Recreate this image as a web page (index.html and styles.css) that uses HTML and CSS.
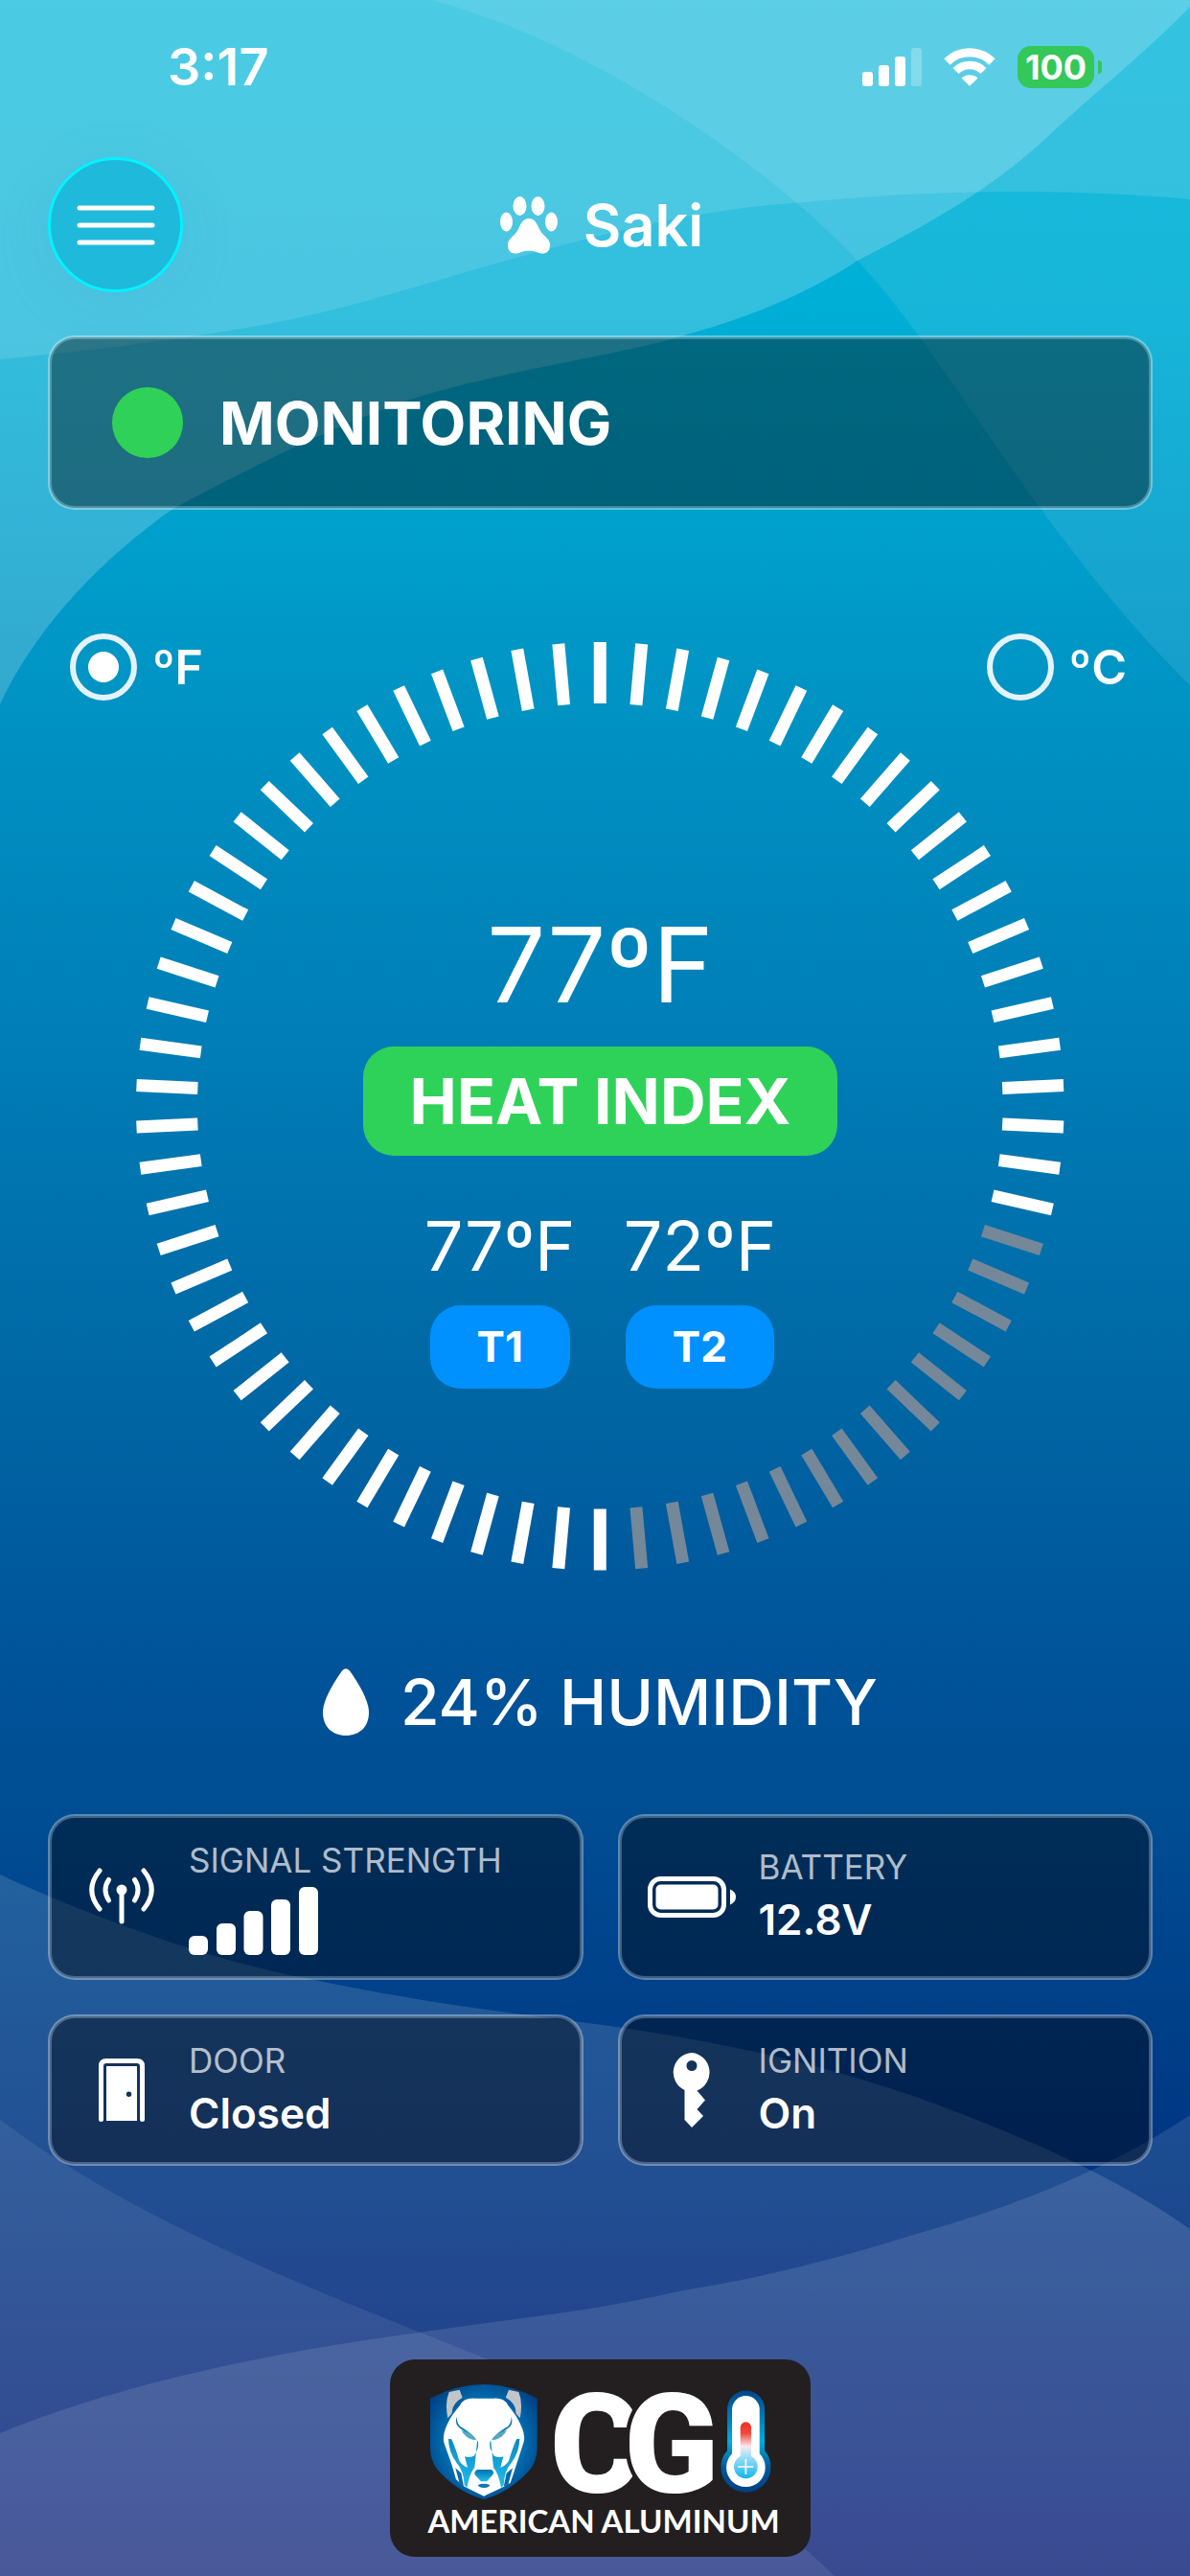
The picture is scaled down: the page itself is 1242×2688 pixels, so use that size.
FILE: index.html
```html
<!DOCTYPE html>
<html lang="en">
<head>
<meta charset="utf-8">
<meta name="viewport" content="width=device-width, initial-scale=1">
<title>Saki</title>
<link rel="stylesheet" href="styles.css">
</head>
<body>
<div class="screen">
  <svg class="backdrop" viewBox="0 0 1242 2688" preserveAspectRatio="none" aria-hidden="true">
    <g fill="#fff">
      <path fill-opacity=".2" d="M0 0H1242V7C1190 60 1150 90 1093 143C1030 202 960 238 895 272C830 315 760 338 689 357C600 378 510 391 428 417C330 451 240 500 182 530C110 580 40 650 0 735Z"/>
      <path fill-opacity=".09" d="M451 0C560 30 660 85 752 150C810 192 850 225 895 272C940 320 980 380 1022 440C1090 540 1165 640 1242 715V0Z"/>
      <path fill-opacity=".12" d="M0 375C90 366 180 356 269 340C370 322 460 290 546 267C640 240 740 217 840 211C970 198 1110 196 1242 208V0H0Z"/>
      <path fill-opacity=".133" d="M0 1956C130 2016 250 2052 323 2065C450 2092 550 2102 650 2116C760 2132 860 2155 956 2188C1060 2226 1160 2268 1242 2326V2688H0Z"/>
      <path fill-opacity=".11" d="M1242 2207C1150 2268 1050 2305 950 2333C870 2358 790 2378 713 2390C620 2412 530 2420 444 2433C270 2456 120 2490 0 2539V2688H1242Z"/>
      <path fill-opacity=".08" d="M0 2212C60 2256 120 2292 198 2330C300 2380 400 2418 507 2461C650 2520 770 2590 871 2688H0Z"/>
    </g>
  </svg>

  <div class="status">
    <span class="clock">3:17</span>
    <div class="status-icons">
      <svg width="62" height="40" viewBox="0 0 62 40" fill="#fff" aria-hidden="true">
        <rect x="0" y="25" width="11" height="15" rx="3"/><rect x="17" y="18" width="11" height="22" rx="3"/><rect x="34" y="9" width="11" height="31" rx="3"/><rect x="51" y="0" width="11" height="40" rx="3" opacity=".25"/>
      </svg>
      <svg width="54" height="40" viewBox="0 0 54 40" fill="none" stroke="#fff" aria-hidden="true">
        <path d="M3.500 14.500A33.500 33.500 0 0 1 50.500 14.500" stroke-width="9"/>
        <path d="M12.500 24A20.500 20.500 0 0 1 41.500 24" stroke-width="8.500"/>
        <path d="M18.500 31.500A12.500 12.500 0 0 1 35.500 31.500L27 39.800Z" fill="#fff" stroke="none"/>
      </svg>
      <div class="phone-battery"><span class="phone-level">100</span><i class="phone-nub"></i></div>
    </div>
  </div>

  <header class="topbar">
    <button class="menu" type="button" aria-label="Menu">
      <svg width="82" height="42" viewBox="0 0 82 42" stroke="#fff" stroke-width="5" stroke-linecap="round" aria-hidden="true"><path d="M3 3H79M3 21H79M3 39H79"/></svg>
    </button>
    <h1 class="title">
      <svg width="60" height="60" viewBox="0 0 60 60" fill="#fff" aria-hidden="true">
        <ellipse cx="20.500" cy="10" rx="7" ry="10"/><ellipse cx="39.500" cy="10" rx="7" ry="10"/>
        <ellipse cx="6.500" cy="26.500" rx="6.500" ry="10"/><ellipse cx="53.500" cy="26.500" rx="6.500" ry="10"/>
        <path d="M30 23C37 23 39 30 42 36C46 42 52 44 52 51C52 60 44 61 38 58C34 56.300 26 56.300 22 58C16 61 8 60 8 51C8 44 14 42 18 36C21 30 23 23 30 23Z"/>
      </svg>
      <span>Saki</span>
    </h1>
  </header>

  <main class="main">
    <section class="panel state"><i class="state-dot"></i><span>MONITORING</span></section>

    <section class="dial">
      <div class="units">
        <label class="unit"><input class="radio" type="radio" name="unit" checked><span>ºF</span></label>
        <label class="unit"><input class="radio" type="radio" name="unit"><span>ºC</span></label>
      </div>
      <svg class="ring" viewBox="0 0 969 969" aria-hidden="true">
        <defs>
          <rect id="tick" x="478" width="13" height="64" fill="currentColor"/>
          <g id="sector">
            <use href="#tick"/>
            <use href="#tick" transform="rotate(5.142857 484.500 484.500)"/>
            <use href="#tick" transform="rotate(10.285714 484.500 484.500)"/>
            <use href="#tick" transform="rotate(15.428571 484.500 484.500)"/>
            <use href="#tick" transform="rotate(20.571429 484.500 484.500)"/>
            <use href="#tick" transform="rotate(25.714286 484.500 484.500)"/>
            <use href="#tick" transform="rotate(30.857143 484.500 484.500)"/>
          </g>
        </defs>
        <g class="ring-on">
          <use href="#sector"/>
          <use href="#sector" transform="rotate(36 484.500 484.500)"/>
          <use href="#sector" transform="rotate(72 484.500 484.500)"/>
          <use href="#sector" transform="rotate(180 484.500 484.500)"/>
          <use href="#sector" transform="rotate(216 484.500 484.500)"/>
          <use href="#sector" transform="rotate(252 484.500 484.500)"/>
          <use href="#sector" transform="rotate(288 484.500 484.500)"/>
          <use href="#sector" transform="rotate(324 484.500 484.500)"/>
        </g>
        <g class="ring-off">
          <use href="#sector" transform="rotate(108 484.500 484.500)"/>
          <use href="#sector" transform="rotate(144 484.500 484.500)"/>
        </g>
      </svg>
      <div class="readout">
        <div class="temp-main">77ºF</div>
        <button class="pill pill-heat" type="button">HEAT INDEX</button>
        <div class="probes">
          <div class="probe"><span class="temp">77ºF</span><button class="pill pill-probe" type="button">T1</button></div>
          <div class="probe"><span class="temp">72ºF</span><button class="pill pill-probe" type="button">T2</button></div>
        </div>
      </div>
    </section>

    <div class="humidity">
      <svg width="48" height="70" viewBox="0 0 48 70" fill="#fff" aria-hidden="true"><path d="M20 2.500Q24-2 28 2.500C37 15 48 33 48 46C48 61 38 70 24 70S0 61 0 46C0 33 11 15 20 2.500Z"/></svg>
      <span>24% HUMIDITY</span>
    </div>

    <section class="cards">
      <div class="panel card">
        <div class="card-icon">
          <svg width="68" height="60" viewBox="0 0 68 60" fill="none" stroke="#fff" stroke-width="5" stroke-linecap="round" aria-hidden="true">
            <path d="M34 23V56"/><circle cx="34" cy="23" r="5.500" fill="#fff" stroke="none"/>
            <path d="M20.500 12.500Q13.500 23 20.500 34M47.500 12.500Q54.500 23 47.500 34M11 3Q-5.500 23 11 43M57 3Q73.500 23 57 43"/>
          </svg>
        </div>
        <div class="card-text">
          <div class="label">SIGNAL STRENGTH</div>
          <svg class="bars" width="135" height="71" viewBox="0 0 135 71" fill="#fff" role="img" aria-label="5 of 5 bars">
            <rect x="0" y="51" width="20" height="20" rx="6"/><rect x="29" y="38" width="20" height="33" rx="6"/><rect x="57.500" y="25" width="20" height="46" rx="6"/><rect x="86" y="13" width="20" height="58" rx="6"/><rect x="115" y="0" width="20" height="71" rx="6"/>
          </svg>
        </div>
      </div>
      <div class="panel card">
        <div class="card-icon">
          <svg width="92" height="43" viewBox="0 0 92 43" aria-hidden="true">
            <rect x="2.500" y="2.500" width="77" height="38" rx="11" fill="none" stroke="#fff" stroke-width="5"/><rect x="8.500" y="8.500" width="65" height="26" rx="5" fill="#fff"/><path d="M86 13.500Q92 16 92 21.500T86 29.500Z" fill="#fff"/>
          </svg>
        </div>
        <div class="card-text"><div class="label">BATTERY</div><div class="value">12.8V</div></div>
      </div>
      <div class="panel card">
        <div class="card-icon">
          <svg width="48" height="66" viewBox="0 0 48 66" aria-hidden="true">
            <path d="M2.500 63.500V8Q2.500 2.500 8 2.500H40Q45.500 2.500 45.500 8V63.500" fill="none" stroke="#fff" stroke-width="5" stroke-linecap="round"/>
            <path fill="#fff" fill-rule="evenodd" d="M8 8H40V65H8ZM31.500 34.500A2.700 2.700 0 1 0 31.500 40A2.700 2.700 0 1 0 31.500 34.500Z"/>
          </svg>
        </div>
        <div class="card-text"><div class="label">DOOR</div><div class="value">Closed</div></div>
      </div>
      <div class="panel card">
        <div class="card-icon">
          <svg width="42" height="78" viewBox="0 0 42 78" aria-hidden="true">
            <path fill="#fff" fill-rule="evenodd" d="M21 0A20.500 20.500 0 0 1 26.500 39.500L35 49.500L26.500 59L33 66L21 78L13.500 70V39A20.500 20.500 0 0 1 21 0ZM21 8A5.500 5.500 0 1 0 21 19A5.500 5.500 0 1 0 21 8Z"/>
          </svg>
        </div>
        <div class="card-text"><div class="label">IGNITION</div><div class="value">On</div></div>
      </div>
    </section>

    <footer class="brand">
      <svg class="brand-art" viewBox="170 130 1080 375" role="img" aria-label="CG">
        <defs>
          <radialGradient id="shield" cx=".5" cy=".5" r=".6"><stop offset="0" stop-color="#00aee0"/><stop offset=".55" stop-color="#0074b5"/><stop offset="1" stop-color="#004186"/></radialGradient>
          <linearGradient id="ice" x1="0" y1="0" x2="0" y2="1"><stop offset="0" stop-color="#0072b0"/><stop offset="1" stop-color="#20bdec"/></linearGradient>
          <linearGradient id="case" x1="0" y1="0" x2="0" y2="1"><stop offset="0" stop-color="#00458c"/><stop offset=".5" stop-color="#00aedb"/><stop offset=".75" stop-color="#005a9c"/><stop offset="1" stop-color="#003f83"/></linearGradient>
          <linearGradient id="mercury" x1="0" y1="0" x2="0" y2="1"><stop offset="0" stop-color="#ee3124"/><stop offset=".2" stop-color="#f0483c"/><stop offset=".43" stop-color="#fbe9ee"/><stop offset=".6" stop-color="#a4e0f6"/><stop offset="1" stop-color="#12b5ee"/></linearGradient>
        </defs>
        <path d="M179 186Q345 98 514 186V340Q514 380 492 408Q430 478 347 502Q262 478 201 408Q179 380 179 340Z" fill="url(#shield)"/>
        <path d="M234 248Q224 200 238 166L271 159L280 184Q252 204 246 234ZM460 248Q470 200 456 166L425 159L415 184Q444 204 448 234Z" fill="#c3c5c9"/>
        <path d="M248 226Q250 200 280 184Q286 190 270 208ZM447 226Q445 200 416 184Q410 190 426 208Z" fill="#0a5da2"/>
        <path d="M272 208Q284 184 318 186H378Q411 184 423 208Q450 242 456 256Q478 296 472 322L448 396L430 450L410 462L347 492L286 462L260 440L246 392L222 324Q216 296 238 256Q244 242 272 208Z" fill="#fff"/>
        <path d="M262 243Q254 270 276 282L328 320Q334 340 316 366Q300 372 287 368L296 402Q284 400 270 382Q262 352 246 314L236 312Q236 352 262 388Q284 412 286 458L294 466Q302 420 318 402L326 320Q318 302 280 278Q262 270 262 243ZM433 243Q441 270 419 282L367 320Q361 340 379 366Q395 372 408 368L399 402Q411 400 425 382Q433 352 449 314L459 312Q459 352 433 388Q411 412 409 458L401 466Q393 420 377 402L369 320Q377 302 415 278Q433 270 433 243Z" fill="url(#ice)"/>
        <path d="M276 286L304 294L322 316Q294 316 276 286ZM419 286L391 294L373 316Q401 316 419 286Z" fill="#55a7c2"/>
        <path d="M326 409H370Q382 416 374 426L356 446H338L320 426Q314 416 326 409Z" fill="url(#ice)"/>
        <path d="M328 457Q347 449 366 457Q362 466 347 466Q332 466 328 457Z" fill="#0878b3"/>
        <path d="M258 404L272 456L284 462L276 420ZM437 404L423 456L409 462L418 420Z" fill="#0869aa"/>
        <text class="brand-initials" x="554" y="481">C<tspan class="brand-front" x="786">G</tspan></text>
        <path d="M1109 220A58 58 0 0 1 1226 220V350Q1245 370 1245 402A78 78 0 0 1 1089 402Q1089 370 1109 350Z" fill="url(#case)"/>
        <path d="M1124 221A43 43 0 0 1 1210 221V359A61 61 0 1 1 1124 359Z" fill="#fff"/>
        <path d="M1150 277A17 17 0 0 1 1184 277V367A37 37 0 1 1 1150 367Z" fill="url(#mercury)"/>
        <path d="M1142 400H1191M1167 376V424" stroke="#fff" stroke-width="5"/>
      </svg>
      <div class="brand-name">AMERICAN ALUMINUM</div>
    </footer>
  </main>
</div>
</body>
</html>
```
FILE: styles.css
```css
* { box-sizing: border-box; }

body {
  margin: 0;
  color: #fff;
  font-family: Inter, "Liberation Sans", sans-serif;
}

button {
  border: 0;
  padding: 0;
  color: inherit;
  font: inherit;
}

svg { display: block; }

.screen {
  position: relative;
  z-index: 0;
  min-height: 100vh;
  background: linear-gradient(#00b6da 0%, #00afd6 12%, #00a1cd 20%, #0095c5 26%, #007bb5 42%, #0068a5 53%, #00549a 64%, #004c92 71%, #003e88 79%, #003080 87%, #001572 100%);
}

.backdrop {
  position: absolute;
  inset: 0;
  z-index: -1;
  width: 100%;
  height: 100%;
}

/* Phone status bar */
.status {
  display: flex;
  justify-content: space-between;
  align-items: center;
  height: 140px;
  padding: 0 92px 0 175px;
}

.clock { font-size: 54px; font-weight: 600; line-height: 64px; }

.status-icons { display: flex; align-items: center; gap: 23px; }

.phone-battery { display: flex; align-items: center; gap: 4px; }

.phone-level {
  width: 80px;
  border-radius: 14px;
  background: #34c759;
  font-size: 36px;
  font-weight: 700;
  line-height: 44px;
  text-align: center;
}

.phone-nub {
  width: 4px;
  height: 14px;
  border-radius: 0 4px 4px 0;
  background: #34c759;
}

/* Header */
.topbar {
  display: grid;
  grid-template-columns: 140px 1fr 140px;
  align-items: center;
  padding: 24px 36px 0 50px;
}

.menu {
  display: grid;
  place-items: center;
  width: 141px;
  height: 141px;
  border: 3px solid #00f3ff;
  border-radius: 50%;
  background: #1fb9dc;
  box-shadow: 0 12px 60px rgba(60, 150, 190, .12);
}

.title {
  display: flex;
  justify-content: center;
  align-items: center;
  gap: 27px;
  margin: 0;
  font-size: 61px;
  font-weight: 600;
  line-height: 76px;
}

.main { padding: 45px 39px 20px 50px; }

/* The outline straddles the edge of the fill: half outside it, half over it */
.panel {
  border: 2px solid rgba(255, 255, 255, .35);
  border-radius: 28px;
  background: rgba(0, 0, 0, .4) padding-box;
  box-shadow: inset 0 0 0 2px rgba(255, 255, 255, .25);
}

.state {
  display: flex;
  align-items: center;
  gap: 38px;
  min-height: 182px;
  padding: 0 65px;
  font-size: 62px;
  font-weight: 700;
}

.state-dot {
  width: 74px;
  height: 74px;
  border-radius: 50%;
  background: #30d158;
}

/* Temperature dial */
.dial {
  display: grid;
  justify-items: center;
  margin-top: 129px;
}

.units, .ring, .readout { grid-area: 1 / 1; }

.units {
  z-index: 1;
  display: flex;
  justify-content: space-between;
  align-self: start;
  justify-self: stretch;
  padding: 0 27px 0 23px;
}

.unit {
  display: flex;
  align-items: center;
  gap: 16px;
  font-size: 50px;
  font-weight: 600;
  line-height: 70px;
}

.radio {
  appearance: none;
  display: grid;
  place-items: center;
  width: 70px;
  height: 70px;
  margin: 0;
  border: 6px solid #e4f3fa;
  border-radius: 50%;
}

.radio:checked::before {
  content: "";
  width: 32px;
  height: 32px;
  border-radius: 50%;
  background: #fff;
}

.ring { width: 84%; margin-top: 9px; }
.ring-on { color: #fff; }
.ring-off { color: #748899; }

.readout {
  z-index: 1;
  align-self: center;
  display: flex;
  flex-direction: column;
  align-items: center;
  padding-top: 92px;
}

.temp-main { font-size: 108px; font-weight: 400; line-height: 130px; }

.pill {
  border-radius: 32px;
  font-weight: 700;
}

.pill-heat {
  margin-top: 20px;
  padding: 0 49px;
  background: #2fd259;
  font-size: 66px;
  line-height: 114px;
}

.probes { display: flex; gap: 50px; margin-top: 50px; }

.probe {
  display: flex;
  flex-direction: column;
  align-items: center;
  gap: 18px;
}

.temp { font-size: 72px; font-weight: 400; line-height: 88px; }

.pill-probe {
  padding: 0 49px;
  background: #0091ff;
  font-size: 44px;
  line-height: 87px;
}

.humidity {
  display: flex;
  justify-content: center;
  align-items: center;
  gap: 33px;
  margin-top: 95px;
  font-size: 66px;
  font-weight: 500;
  line-height: 84px;
}

/* Sensor cards */
.cards {
  display: grid;
  grid-template-columns: 1fr 1fr;
  gap: 36px;
  margin-top: 75px;
}

.card {
  display: flex;
  align-items: center;
  gap: 24px;
  padding: 22px 29px;
}

.card-icon {
  display: grid;
  place-items: center;
  width: 92px;
}

.label { color: rgba(255, 255, 255, .7); font-size: 35px; line-height: 48px; }
.value { font-size: 44px; font-weight: 600; line-height: 62px; }
.bars { margin: 4px 0 2px; }

/* Brand plate */
.brand {
  width: 38%;
  min-width: 438px;
  margin: 202px auto 0;
  padding: 22px 39px 20px;
  border-radius: 26px;
  background: #231f20;
}

.brand-art { overflow: visible; }

.brand-initials {
  fill: #fff;
  font-family: Roboto, sans-serif;
  font-size: 436px;
  font-weight: 900;
}

.brand-front {
  stroke: #231f20;
  stroke-width: 26px;
  paint-order: stroke;
}

.brand-name {
  margin-top: 3px;
  font-family: Lato, sans-serif;
  font-size: 33px;
  font-weight: 700;
  line-height: 36px;
  text-align: center;
  white-space: nowrap;
}
```
